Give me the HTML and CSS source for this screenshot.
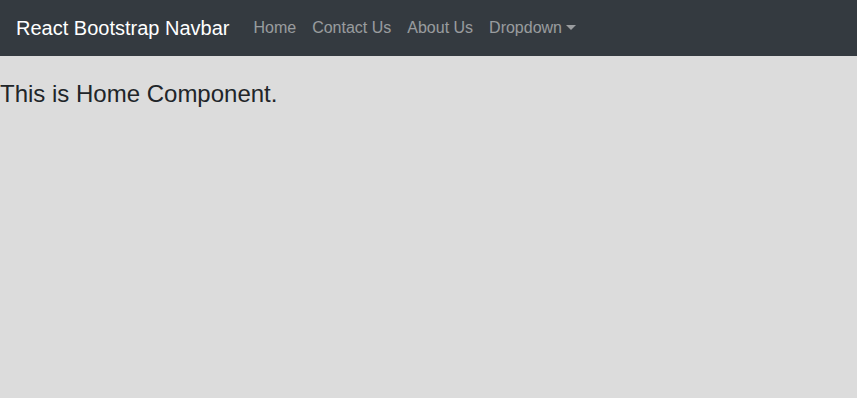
FILE: index.html
```html
<!DOCTYPE html>
<html lang="en">
<head>
  <meta charset="UTF-8" />
  <meta name="viewport" content="width=device-width, initial-scale=1.0" />
  <title>React Bootstrap Navbar</title>
  <link rel="stylesheet" href="styles.css">
</head>
<body>
  <nav class="navbar">
    <a class="brand" href="#">React Bootstrap Navbar</a>
    <ul class="nav">
      <li><a class="nav-link" href="#">Home</a></li>
      <li><a class="nav-link" href="#">Contact Us</a></li>
      <li><a class="nav-link" href="#">About Us</a></li>
      <li><a class="nav-link dropdown-toggle" href="#">Dropdown</a></li>
    </ul>
  </nav>
  <h4 class="title">This is Home Component.</h4>
</body>
</html>
```

FILE: styles.css
```css
:root {
  --dark: #343a40;
  --page: #dcdcdc;
  --text: #212529;
  --link: rgba(255, 255, 255, 0.5);
}
* {
  box-sizing: border-box;
  font-family: "Liberation Sans", Arial, sans-serif;
}
body {
  margin: 0;
  min-height: 100vh;
  background: var(--page);
  color: var(--text);
  font-size: 16px;
  line-height: 1.5;
}
.navbar {
  display: flex;
  align-items: center;
  height: 56px;
  padding: 8px 16px;
  background: var(--dark);
}
.brand {
  margin-right: 16px;
  padding: 5px 0;
  font-size: 20px;
  color: #fff;
  text-decoration: none;
}
.nav {
  display: flex;
  list-style: none;
  margin: 0;
  padding: 0;
}
.nav-link {
  display: block;
  padding: 8px;
  color: var(--link);
  text-decoration: none;
}
.dropdown-toggle::after {
  content: "";
  display: inline-block;
  margin-left: 4px;
  vertical-align: 3px;
  border-top: 5px solid;
  border-left: 5px solid transparent;
  border-right: 5px solid transparent;
}
.title {
  margin: 24px 0 8px;
  font-size: 24px;
  font-weight: 400;
  line-height: 1.2;
}
```
